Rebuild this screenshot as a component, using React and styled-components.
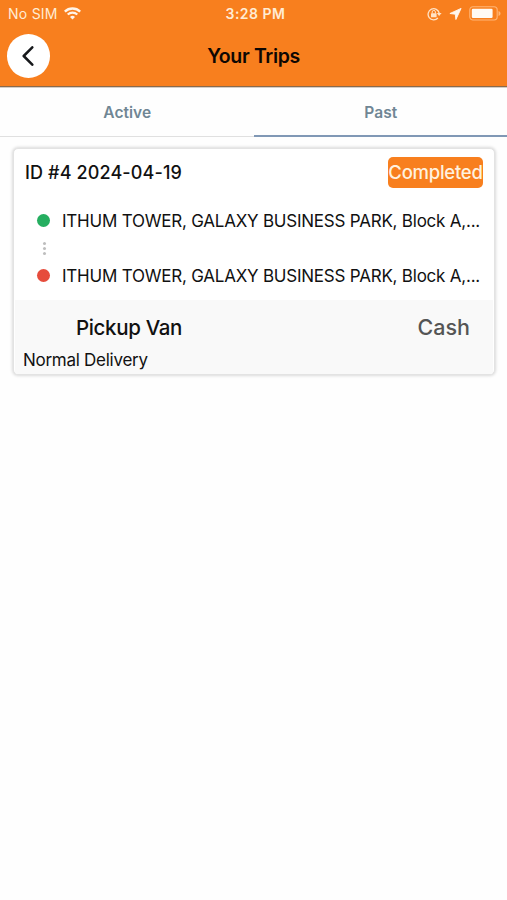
import React from "react";
import styled, { createGlobalStyle } from "styled-components";

const GlobalStyle = createGlobalStyle`
  *, *::before, *::after { box-sizing: border-box; }
  body {
    margin: 0;
    background: #fefefe;
    font-family: Inter, "Liberation Sans", sans-serif;
    color: #111;
  }
`;

const Screen = styled.main`
  width: 100%;
  min-height: 900px;
  background: #fefefe;
  overflow: hidden;
`;

const Header = styled.header`
  height: 87px;
  background: #f87f1e;
  border-bottom: 1px solid #8a6a4c;
  box-shadow: 0 1px 0 #d5cdc6;
`;

const StatusBar = styled.div`
  display: grid;
  grid-template-columns: 1fr auto 1fr;
  align-items: center;
  height: 27px;
  padding: 0 6px 0 8px;
  color: #ffecd4;
`;

const StatusGroup = styled.div`
  display: flex;
  align-items: center;
  justify-content: ${(p) => (p.$end ? "flex-end" : "flex-start")};
  gap: ${(p) => (p.$end ? 7 : 6.5)}px;

  svg { display: block; }
`;

const Label = styled.span`
  font-size: ${(p) => p.$size}px;
  font-weight: ${(p) => p.$weight || 400};
  letter-spacing: ${(p) => p.$track || 0}px;
  color: ${(p) => p.$color || "inherit"};
  line-height: 24px;
  white-space: nowrap;
`;

const Clock = styled(Label)`
  padding-left: 2px;
`;

const TitleBar = styled.div`
  display: grid;
  grid-template-columns: 1fr auto 1fr;
  align-items: center;
  height: 58px;
  padding: 0 7px;
`;

const BackButton = styled.button`
  display: flex;
  align-items: center;
  justify-content: center;
  width: 43px;
  height: 43.5px;
  padding: 0 1px 0 0;
  border: 0;
  border-radius: 50%;
  background: #fff;
`;

const Tabs = styled.nav`
  display: grid;
  grid-template-columns: 1fr 1fr;
  height: 50px;
`;

const Tab = styled.div`
  display: flex;
  align-items: center;
  justify-content: center;
  padding-top: ${(p) => (p.$active ? 4 : 3)}px;
  padding-left: 1px;
  border-bottom: ${(p) => (p.$active ? "2px solid #8098b5" : "1px solid #e0e0e0")};
`;

const Card = styled.article`
  margin: 11px 12px 0 13px;
  height: 227px;
  border: 1px solid #e3e3e3;
  border-radius: 5px;
  background: #fff;
  box-shadow: 0 0 3px 1px rgba(0, 0, 0, 0.14);
  overflow: hidden;
`;

const CardHeader = styled.div`
  display: flex;
  align-items: center;
  justify-content: space-between;
  height: 47px;
  padding: 0 11px;
`;

const Badge = styled.div`
  display: flex;
  align-items: center;
  justify-content: center;
  width: 95px;
  height: 31px;
  padding-bottom: 1px;
  border-radius: 5px;
  background: #f87f1e;
`;

const Route = styled.div`
  display: grid;
  grid-template-columns: 15px 1fr;
  grid-template-rows: 25px 30px 25px;
  column-gap: 11px;
  align-items: center;
  height: 104px;
  padding: 12px 12px 0 22px;
`;

const Dot = styled.span`
  width: 13px;
  height: 13px;
  margin-left: 1px;
  border-radius: 50%;
  background: ${(p) => p.$color};
`;

const Connector = styled.div`
  display: flex;
  flex-direction: column;
  align-items: center;
  gap: 2px;
  padding-left: 2px;
`;

const Tick = styled.span`
  width: 3px;
  height: 3px;
  border-radius: 50%;
  background: #bebebe;
`;

const Summary = styled.footer`
  height: 75px;
  margin: 0 1px;
  padding-top: 15px;
  background: #f9f9f9;
`;

const SummaryRow = styled.div`
  display: flex;
  align-items: flex-end;
  justify-content: space-between;
  height: 24px;
  padding: 0 23px 0 61px;
`;

const Vehicle = styled.div`
  display: flex;
  margin-bottom: -1px;
`;

const Delivery = styled.div`
  display: flex;
  padding: 9px 0 0 8px;
`;

const WifiIcon = () => (
  <svg width="17" height="13" viewBox="0 0 17 13" fill="none" stroke="#fff4e8">
    <path d="M.8 4.6a11.1 11.1 0 0 1 15.4 0" strokeWidth="2.4" />
    <path d="M3.7 7.5a7 7 0 0 1 9.6 0" strokeWidth="2.1" />
    <path d="M6 9.9a3.8 3.8 0 0 1 5 0l-2.5 2.5z" fill="#fff4e8" stroke="none" />
  </svg>
);

const RotationLockIcon = () => (
  <svg width="15" height="14" viewBox="0 0 15 14" fill="none" stroke="#ffe3c6">
    <path d="M10.9 11A5.6 5.6 0 1 1 12.2 6.2" strokeWidth="1.3" />
    <path d="m9.8 6 2.3 3L14.6 6z" fill="#ffe3c6" stroke="none" />
    <rect x="4" y="6.2" width="5.6" height="4" rx=".5" fill="#ffe3c6" stroke="none" />
    <path d="M5.2 6.5V5a1.6 1.6 0 0 1 3.2 0v1.5" strokeWidth="1" />
  </svg>
);

const LocationIcon = () => (
  <svg width="13" height="12" viewBox="0 0 13 12">
    <path d="M12.1.4.9 5.5l5.4.7.6 5.3z" fill="#fff6ed" stroke="#fff6ed" strokeWidth=".9" strokeLinejoin="round" />
  </svg>
);

const BatteryIcon = () => (
  <svg width="32" height="15" viewBox="0 0 32 15">
    <rect x=".8" y=".8" width="27.4" height="13.2" rx="3.2" fill="none" stroke="#ffb677" strokeWidth="1.1" />
    <rect x="2.8" y="2.8" width="20.8" height="9.2" rx="1.2" fill="#fffaf4" />
    <path d="M29.5 5v5c1.3-.5 2-1.4 2-2.5s-.7-2-2-2.5z" fill="#ffb677" />
  </svg>
);

const BackIcon = () => (
  <svg width="12" height="20" viewBox="0 0 12 20" fill="none">
    <path d="M10.3 1.3 1.7 10l8.6 8.7" stroke="#17191c" strokeWidth="2.5" strokeLinecap="round" strokeLinejoin="round" />
  </svg>
);

const ADDRESS = "ITHUM TOWER, GALAXY BUSINESS PARK, Block A,...";

export default function App() {
  return (
    <>
      <GlobalStyle />
      <Screen>
        <Header>
          <StatusBar>
            <StatusGroup>
              <Label $size={14} $track={0.25}>No SIM</Label>
              <WifiIcon />
            </StatusGroup>
            <Clock $size={14} $weight={600} $track={0.5}>3:28 PM</Clock>
            <StatusGroup $end>
              <RotationLockIcon />
              <LocationIcon />
              <BatteryIcon />
            </StatusGroup>
          </StatusBar>
          <TitleBar>
            <BackButton aria-label="Back"><BackIcon /></BackButton>
            <Label as="h1" $size={19.5} $weight={600} $track={-0.35} $color="#0d0703">Your Trips</Label>
          </TitleBar>
        </Header>
        <Tabs>
          <Tab><Label $size={15.5} $weight={600} $track={0.05} $color="#708694">Active</Label></Tab>
          <Tab $active><Label $size={15.5} $weight={600} $track={0.05} $color="#708694">Past</Label></Tab>
        </Tabs>
        <Card>
          <CardHeader>
            <Label $size={18} $weight={500} $track={0.12}>ID #4 2024-04-19</Label>
            <Badge><Label $size={18.5} $weight={500} $track={-0.25} $color="#fff1df">Completed</Label></Badge>
          </CardHeader>
          <Route>
            <Dot $color="#25ae60" />
            <Label $size={17} $track={-0.22}>{ADDRESS}</Label>
            <Connector><Tick /><Tick /><Tick /></Connector>
            <span />
            <Dot $color="#e64c3c" />
            <Label $size={17} $track={-0.22}>{ADDRESS}</Label>
          </Route>
          <Summary>
            <SummaryRow>
              <Vehicle><Label $size={20.5} $weight={500} $track={-0.35}>Pickup Van</Label></Vehicle>
              <Label $size={21.5} $weight={500} $color="#555">Cash</Label>
            </SummaryRow>
            <Delivery><Label $size={17} $track={-0.27}>Normal Delivery</Label></Delivery>
          </Summary>
        </Card>
      </Screen>
    </>
  );
}
